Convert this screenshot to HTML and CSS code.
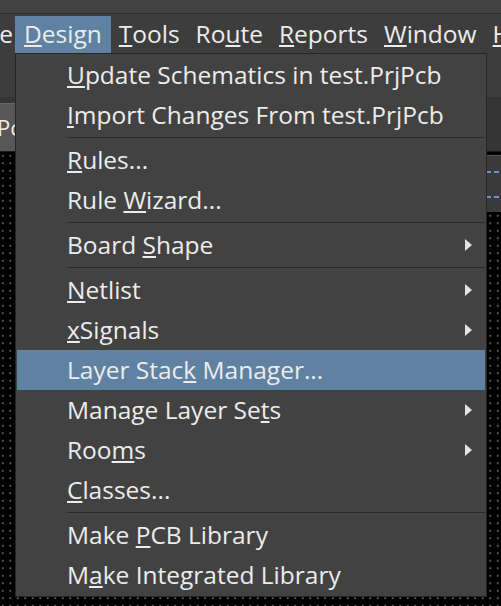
FILE: index.html
```html
<!DOCTYPE html>
<html>
<head>
<meta charset="utf-8">
<link rel="stylesheet" href="styles.css">
</head>
<body>
<div class="screen">
  <div class="titlebar"></div>
  <nav class="menubar">
    <span class="mb-item mb-first"><span><u>P</u>lace</span></span>
    <span class="mb-item mb-active"><u>D</u>esign</span>
    <span class="mb-item"><u>T</u>ools</span>
    <span class="mb-item">Ro<u>u</u>te</span>
    <span class="mb-item"><u>R</u>eports</span>
    <span class="mb-item"><u>W</u>indow</span>
    <span class="mb-item"><u>H</u>elp</span>
  </nav>
  <div class="workspace">
    <div class="toolbar"></div>
    <div class="tabbar"><span class="tab">Pcb1.PcbDoc</span></div>
    <div class="canvas">
      <div class="board">
        <div class="dash"></div>
        <div class="dash"></div>
      </div>
    </div>

    <div class="menu">
      <div class="item"><span class="label"><u>U</u>pdate Schematics in test.PrjPcb</span></div>
      <div class="item"><span class="label"><u>I</u>mport Changes From test.PrjPcb</span></div>
      <div class="sep"></div>
      <div class="item"><span class="label"><u>R</u>ules...</span></div>
      <div class="item"><span class="label">Rule <u>W</u>izard...</span></div>
      <div class="sep"></div>
      <div class="item sub"><span class="label">Board <u>S</u>hape</span><span class="arrow"></span></div>
      <div class="sep"></div>
      <div class="item sub"><span class="label"><u>N</u>etlist</span><span class="arrow"></span></div>
      <div class="item sub"><span class="label"><u>x</u>Signals</span><span class="arrow"></span></div>
      <div class="item hot"><span class="label">Layer Stac<u>k</u> Manager...</span></div>
      <div class="item sub"><span class="label">Manage Layer Se<u>t</u>s</span><span class="arrow"></span></div>
      <div class="item sub"><span class="label">Roo<u>m</u>s</span><span class="arrow"></span></div>
      <div class="item"><span class="label"><u>C</u>lasses...</span></div>
      <div class="sep"></div>
      <div class="item"><span class="label">Make <u>P</u>CB Library</span></div>
      <div class="item"><span class="label">M<u>a</u>ke Integrated Library</span></div>
    </div>
  </div>
</div>
</body>
</html>
```

FILE: styles.css
```css
* { box-sizing: border-box; }
html, body { margin: 0; padding: 0; }
body {
  width: 501px;
  height: 606px;
  overflow: hidden;
  background: #000;
  font-family: "Open Sans", "Noto Sans", sans-serif;
  color: #ececec;
}
.screen {
  width: 501px;
  height: 606px;
  display: flex;
  flex-direction: column;
  overflow: hidden;
}
u {
  text-decoration: underline;
  text-decoration-thickness: 2px;
  text-underline-offset: 2px;
}
.titlebar {
  height: 14px;
  flex: none;
  background: #424242;
  border-bottom: 1px solid #2c2c2c;
}
.menubar {
  height: 39px;
  flex: none;
  background: #3d3d3d;
  display: flex;
  align-items: stretch;
  padding-top: 2px;
  font-size: 24.5px;
  white-space: nowrap;
}
.mb-item {
  display: flex;
  align-items: center;
  padding: 0 8px;
  line-height: 1;
  flex: none;
}
.mb-first {
  width: 15px;
  padding: 0 2px 0 0;
  justify-content: flex-end;
  overflow: hidden;
}
.mb-active { background: #5f82a2; padding: 0 9px; }
.workspace {
  flex: 1;
  position: relative;
  display: flex;
  flex-direction: column;
}
.toolbar {
  height: 44px;
  flex: none;
  background: #3d3d3d;
}
.tabbar {
  height: 55px;
  flex: none;
  background: #353535;
  display: flex;
  align-items: flex-end;
  border-bottom: 1px solid #1a1a1a;
}
.tab {
  height: 48px;
  background: #575757;
  border-top: 1px solid #666;
  font-size: 22px;
  line-height: 46px;
  padding: 0 8px;
  margin-left: -11px;
  white-space: nowrap;
}
.canvas {
  flex: 1;
  position: relative;
  background-color: #000;
  background-image: radial-gradient(circle, #5a5a5a 0.7px, transparent 0.9px);
  background-size: 7.5px 7.5px;
  background-position: -1px 0;
}
.board {
  position: absolute;
  left: 470px;
  top: 3px;
  width: 60px;
  height: 57px;
  background: #3a3a3a;
  border-top: 1px solid #555;
  display: flex;
  flex-direction: column;
  justify-content: space-between;
  padding: 15px 0 14px;
}
.dash {
  height: 2px;
  background: repeating-linear-gradient(90deg, #6d8fd8 0 5px, transparent 5px 8px);
}
.menu {
  position: absolute;
  left: 15px;
  top: 0;
  width: 472px;
  background: #424242;
  border: 1px solid #262626;
  padding: 1px;
  font-size: 24.5px;
  white-space: nowrap;
}
.item {
  height: 40px;
  display: flex;
  align-items: center;
  padding-left: 50px;
  padding-right: 13px;
  line-height: 1;
}
.item .label { flex: 1; }
.item.hot { background: #5f82a2; }
.arrow {
  width: 0;
  height: 0;
  border-top: 6.5px solid transparent;
  border-bottom: 6.5px solid transparent;
  border-left: 7px solid #e4e4e4;
}
.sep {
  height: 5px;
  margin-left: 50px;
  padding-top: 2px;
}
.sep::before {
  content: "";
  display: block;
  height: 1px;
  background: #2a2a2a;
}
```
